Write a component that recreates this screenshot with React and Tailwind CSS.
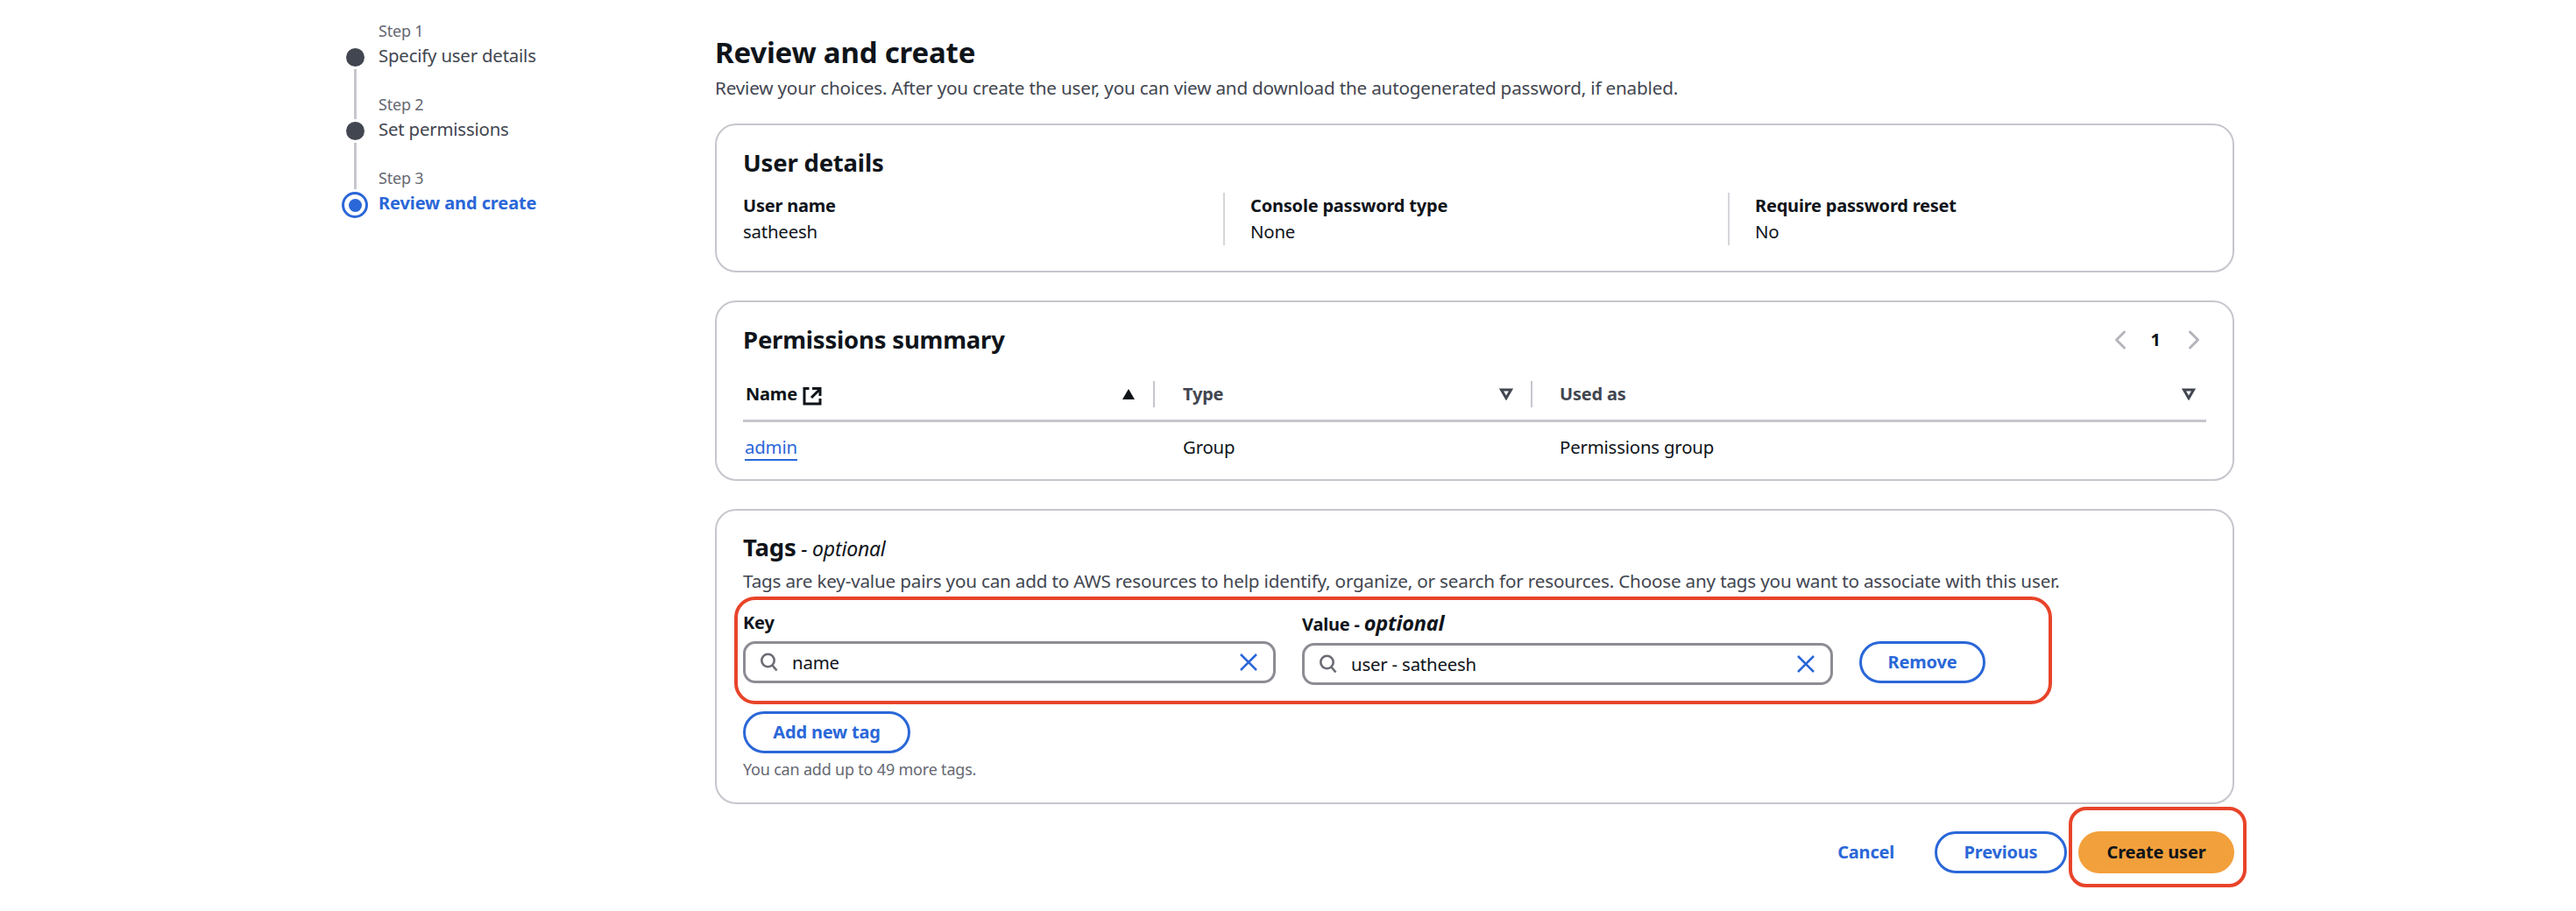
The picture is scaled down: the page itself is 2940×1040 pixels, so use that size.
import { ChevronLeft, ChevronRight } from 'lucide-react';

const LINK = 'text-[#2a67d8]';

function SearchIcon() {
  return (
    <svg width="22" height="22" viewBox="0 0 22 22" fill="none" stroke="#6b6c74" strokeWidth="2.6" className="shrink-0">
      <circle cx="9.5" cy="9" r="7.2" />
      <path d="M14.5 14.5 L19.5 20.5" />
    </svg>
  );
}

function ClearIcon() {
  return (
    <svg width="22" height="22" viewBox="0 0 22 22" fill="none" stroke="#2a67d8" strokeWidth="2.6" className="shrink-0">
      <path d="M2 2 L20 20 M20 2 L2 20" />
    </svg>
  );
}

function ExternalIcon() {
  return (
    <svg width="22" height="22" viewBox="0 0 22 22" fill="none" stroke="#0f141a" strokeWidth="3" className="mt-[3px]">
      <path d="M7.5 2.5 H2 V20 H20 V14" />
      <path d="M10 13 L19.5 3.5 M11 2.5 H20 V11" />
    </svg>
  );
}

function SortUp() {
  return (
    <svg width="16" height="14" viewBox="0 0 16 14" fill="#0f141a">
      <path d="M8 1 L15 13 H1 Z" />
    </svg>
  );
}

function SortDown() {
  return (
    <svg width="16" height="14" viewBox="0 0 16 14" fill="none" stroke="#424650" strokeWidth="3">
      <path d="M2.5 2 H13.5 L8 11.5 Z" />
    </svg>
  );
}

function Step({ label, title, active }) {
  return (
    <div className="flex flex-col">
      <span className="text-[18px] leading-[26px] text-[#656871]">{label}</span>
      <span className={active ? 'text-[20px] leading-[32px] font-bold text-[#2a67d8] tracking-[-0.1px]' : 'text-[20.4px] leading-[30px] mb-[2px] text-[#424650]'}>
        {title}
      </span>
    </div>
  );
}

function Stepper() {
  return (
    <div className="flex shrink-0">
      <div className="w-[30px] flex flex-col items-center pt-[55px]">
        <div className="w-[21px] h-[21px] rounded-full bg-[#424650]" />
        <div className="w-[3px] h-[57px] mt-[3px] bg-[#c6c6cd]" />
        <div className="w-[21px] h-[21px] mt-[3px] rounded-full bg-[#424650]" />
        <div className="w-[3px] h-[53px] mt-[3px] bg-[#c6c6cd]" />
        <div className="w-[30px] h-[30px] mt-[3px] rounded-full border-[3px] border-[#2a67d8] flex items-center justify-center">
          <div className="w-[15px] h-[15px] rounded-full bg-[#2a67d8]" />
        </div>
      </div>
      <div className="w-[384px] ml-[12px] pt-[22px] flex flex-col gap-[26px]">
        <Step label="Step 1" title="Specify user details" />
        <Step label="Step 2" title="Set permissions" />
        <Step label="Step 3" title="Review and create" active />
      </div>
    </div>
  );
}

function Field({ label, value, first }) {
  return (
    <div className={first ? 'h-[60px]' : 'h-[60px] border-l-2 border-[#d5d5da] pl-[29px]'}>
      <div className="leading-[30px] font-bold text-[#0f141a]">{label}</div>
      <div className="text-[20.4px] leading-[28px] text-[#0f141a]">{value}</div>
    </div>
  );
}

function Card({ className, children }) {
  return <div className={`border-2 border-[#c6c6cd] rounded-[24px] bg-white px-[30px] ${className}`}>{children}</div>;
}

function SearchInput({ value }) {
  return (
    <div className="h-[48px] border-[3px] border-[#8c8c94] rounded-[14px] flex items-center pl-[16px] pr-[17px]">
      <SearchIcon />
      <span className="ml-[15px] flex-1 text-[20.4px] text-[#0f141a]">{value}</span>
      <ClearIcon />
    </div>
  );
}

function OutlineButton({ className, children }) {
  return (
    <button className={`h-[48px] border-[3px] border-[#2a67d8] rounded-full font-bold ${LINK} ${className}`}>
      {children}
    </button>
  );
}

export default function App() {
  return (
    <div className="w-[2940px] h-[1040px] overflow-hidden bg-white pl-[390px] flex font-['Noto_Sans',sans-serif] text-[20px] tracking-[-0.2px]">
      <Stepper />

      <div className="w-[1734px] pt-[38px]">
        <h1 className="text-[33px] leading-[44px] font-bold text-[#0f141a]">Review and create</h1>
        <p className="mt-[4px] text-[20.7px] leading-[28px] text-[#424650]">
          Review your choices. After you create the user, you can view and download the autogenerated password, if enabled.
        </p>

        {/* User details */}
        <Card className="mt-[27px] h-[170px] pt-[25px]">
          <h2 className="text-[27.5px] leading-[36px] font-bold text-[#0f141a]">User details</h2>
          <div className="mt-[16px] grid grid-cols-[548px_576px_1fr]">
            <Field label="User name" value="satheesh" first />
            <Field label="Console password type" value="None" />
            <Field label="Require password reset" value="No" />
          </div>
        </Card>

        {/* Permissions */}
        <Card className="mt-[32px] h-[206px] pt-[25px]">
          <div className="flex items-center justify-between">
            <h2 className="text-[27.5px] leading-[36px] font-bold text-[#0f141a]">Permissions summary</h2>
            <div className="flex items-center text-[#b4b4bb] -mr-[4px]">
              <ChevronLeft size={36} strokeWidth={2} />
              <span className="w-[48px] pr-[4px] text-center font-bold text-[#0f141a]">1</span>
              <ChevronRight size={36} strokeWidth={2} />
            </div>
          </div>
          <div className="mt-[29px] pb-[14px] border-b-[3px] border-[#c6c6cd] grid grid-cols-[470px_431px_1fr]">
            <div className="h-[30px] border-r-2 border-[#c6c6cd] flex items-center justify-between pl-[3px] pr-[20px]">
              <span className="flex items-center gap-[6px] font-bold text-[#0f141a]">Name <ExternalIcon /></span>
              <SortUp />
            </div>
            <div className="h-[30px] border-r-2 border-[#c6c6cd] flex items-center justify-between pl-[32px] pr-[20px]">
              <span className="font-bold text-[#424650]">Type</span>
              <SortDown />
            </div>
            <div className="h-[30px] flex items-center justify-between pl-[31px] pr-[12px]">
              <span className="font-bold text-[#424650]">Used as</span>
              <SortDown />
            </div>
          </div>
          <div className="mt-[13px] grid grid-cols-[470px_431px_1fr] text-[20.4px] leading-[30px] text-[#0f141a]">
            <span><span className={`ml-[2px] border-b-2 border-[#2a67d8] ${LINK}`}>admin</span></span>
            <span className="pl-[32px]">Group</span>
            <span className="pl-[31px]">Permissions group</span>
          </div>
        </Card>

        {/* Tags */}
        <Card className="mt-[32px] h-[337px] pt-[24px]">
          <h2 className="leading-[36px] text-[#0f141a]">
            <span className="text-[27.5px] font-bold">Tags</span>
            <span className="text-[23px] italic"> - optional</span>
          </h2>
          <p className="mt-[2px] text-[20.7px] leading-[30px] text-[#424650]">
            Tags are key-value pairs you can add to AWS resources to help identify, organize, or search for resources. Choose any tags you want to associate with this user.
          </p>
          <div className="relative mt-[18px] grid grid-cols-[608px_606px_144px] gap-x-[30px]">
            <div className="absolute -left-[10px] -top-[15px] w-[1504px] h-[123px] border-[4px] border-[#e8442a] rounded-[24px] pointer-events-none" />
            <div>
              <div className="leading-[30px] font-bold text-[#0f141a]">Key</div>
              <div className="mt-[6px]"><SearchInput value="name" /></div>
            </div>
            <div>
              <div className="leading-[30px] font-bold text-[#0f141a]">Value - <span className="text-[23.5px] italic">optional</span></div>
              <div className="mt-[6px]"><SearchInput value="user - satheesh" /></div>
            </div>
            <div className="pt-[36px]">
              <OutlineButton className="w-[144px]">Remove</OutlineButton>
            </div>
          </div>
          <OutlineButton className="mt-[30px] w-[191px]">Add new tag</OutlineButton>
          <p className="mt-[5px] text-[18px] leading-[26px] text-[#656871]">You can add up to 49 more tags.</p>
        </Card>

        {/* Footer actions */}
        <div className="mt-[31px] flex items-center justify-end">
          <button className={`font-bold ${LINK}`}>Cancel</button>
          <OutlineButton className="ml-[46px] w-[151px]">Previous</OutlineButton>
          <div className="relative ml-[13px]">
            <button className="w-[178px] h-[48px] rounded-full bg-[#f2a03b] font-bold text-[#0f141a]">Create user</button>
            <div className="absolute -left-[11px] -right-[14px] -top-[28px] -bottom-[16px] border-[4px] border-[#e8442a] rounded-[20px] pointer-events-none" />
          </div>
        </div>
      </div>
    </div>
  );
}
